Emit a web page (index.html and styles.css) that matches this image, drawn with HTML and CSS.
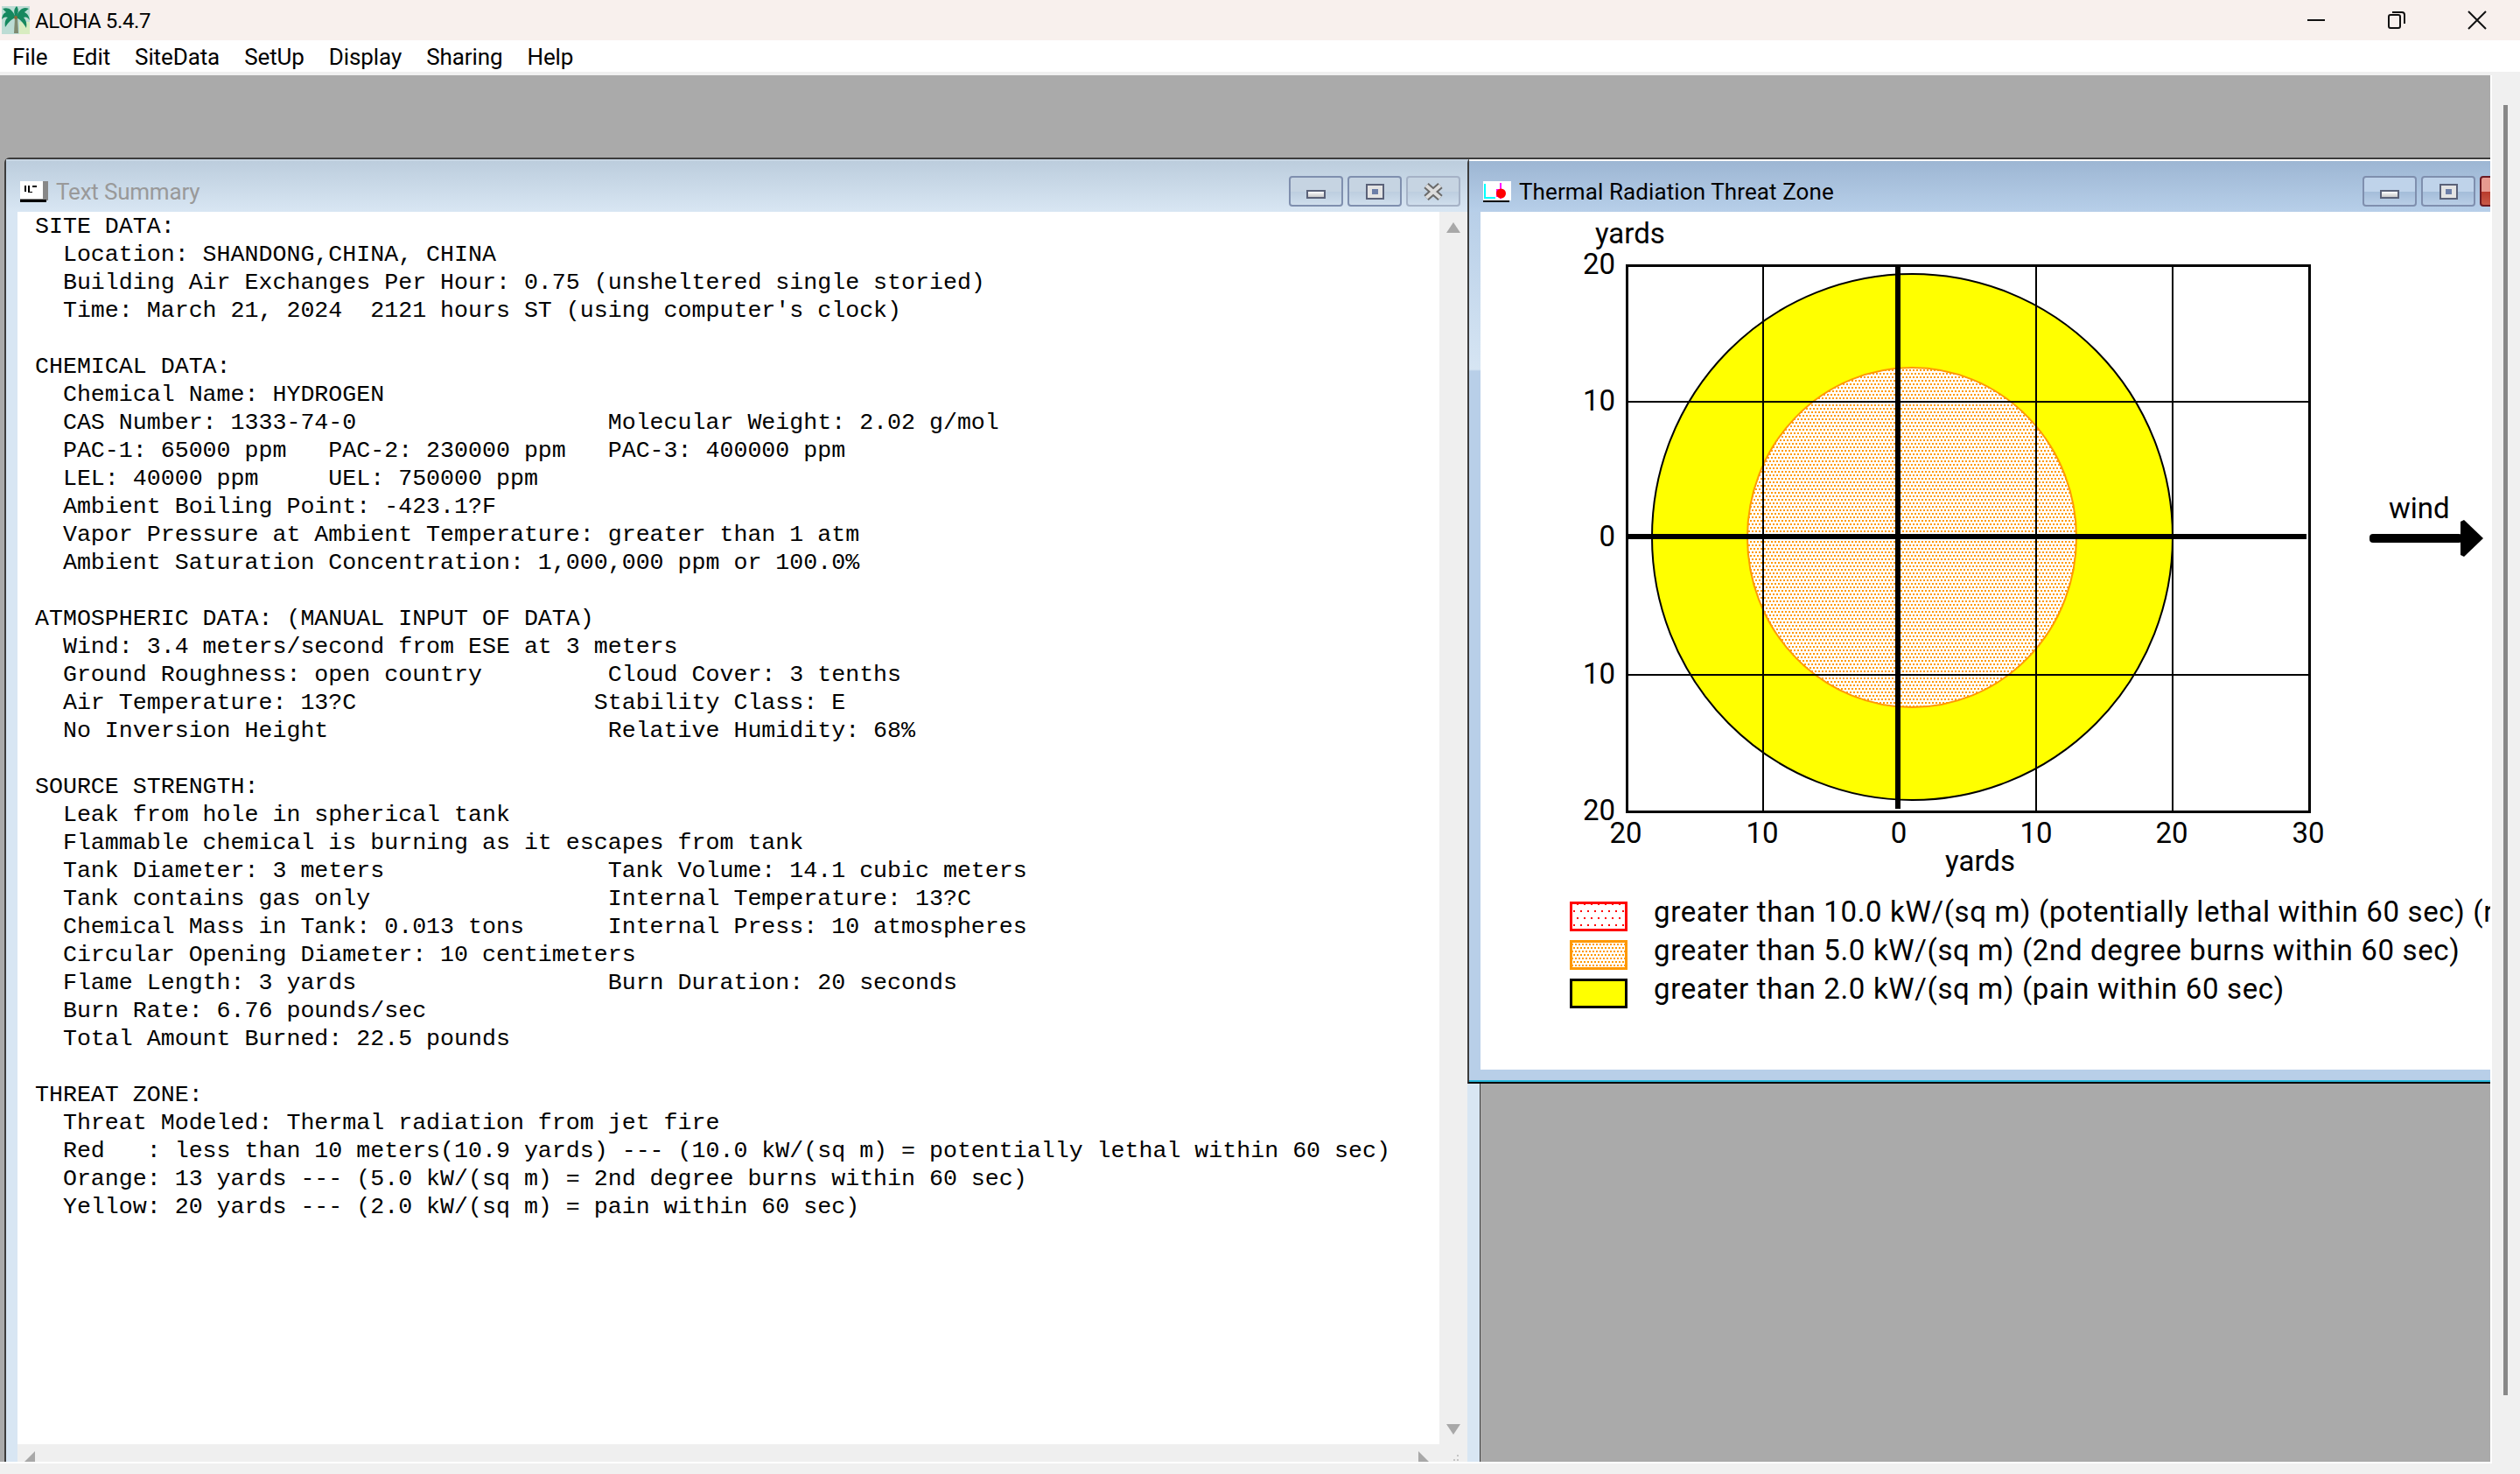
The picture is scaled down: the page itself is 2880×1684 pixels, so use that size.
FILE: index.html
```html
<!DOCTYPE html>
<html lang="en">
<head>
  <meta charset="UTF-8" />
  <title>ALOHA 5.4.7</title>
  <link rel="stylesheet" href="styles.css">
</head>
<body>
  <header class="titlebar">
    <svg class="app-icon" width="32" height="32" viewBox="0 0 32 32">
      <rect width="32" height="32" fill="#bcdcd4" />
      <rect x="20" y="18" width="12" height="14" fill="#d8ecc0" />
      <path d="M15 13 L18 13 L19 31 L14 31 Z" fill="#7f8a70" />
      <path d="M16 13 C12 3 7 1 1 3 C3 5 4 6 5 7 C2 8 1 10 0 15 C3 12 5 12 7 13 C4 15 3 19 4 24 C8 18 11 15 16 13 Z" fill="#16885f" />
      <path d="M16 13 C20 3 25 0 31 3 C28 5 27 6 26 7 C29 8 31 11 32 16 C29 12 27 12 25 13 C28 16 29 20 28 25 C24 18 21 15 16 13 Z" fill="#16885f" />
      <path d="M16 13 C13 7 14 3 17 0 C20 4 19 8 16 13 Z" fill="#16885f" />
      <circle cx="16" cy="13" r="2" fill="#8a6a3a" />
    </svg>
    <span class="app-name">ALOHA 5.4.7</span>
    <div class="win-controls">
      <button class="win-control">
        <svg width="22" height="22" viewBox="0 0 22 22"><path d="M1 11 H21" stroke="#111" stroke-width="2" /></svg>
      </button>
      <button class="win-control">
        <svg width="22" height="22" viewBox="0 0 22 22" fill="none" stroke="#111" stroke-width="2"><rect x="2" y="5" width="13" height="15" rx="2" /><path d="M6 2 H17 Q20 2 20 5 V15" /></svg>
      </button>
      <button class="win-control">
        <svg width="22" height="22" viewBox="0 0 22 22"><path d="M1 1 L21 21 M21 1 L1 21" stroke="#111" stroke-width="2" /></svg>
      </button>
    </div>
  </header>

  <nav class="menubar">
    <span>File</span>
    <span>Edit</span>
    <span>SiteData</span>
    <span>SetUp</span>
    <span>Display</span>
    <span>Sharing</span>
    <span>Help</span>
  </nav>

  <div class="main">
    <div class="workspace">

      <section class="window text-window">
        <div class="window-title inactive">
          <svg width="32" height="24" viewBox="0 0 32 24">
            <rect width="32" height="22" fill="#fff" />
            <rect x="26" width="6" height="20" fill="#888" />
            <rect y="20" width="32" height="2" fill="#888" />
            <rect y="21" width="30" height="3" fill="#000" />
            <path d="M5 5 H7 V12 H5 Z M9 5 H11 V12 H14 V13 H9 Z M14 5 H19 V7 H14 Z" fill="#000" />
          </svg>
          <span class="window-name">Text Summary</span>
          <div class="window-buttons">
            <button class="window-button"><span class="icon-min"></span></button>
            <button class="window-button"><span class="icon-max"></span></button>
            <button class="window-button close-off">
              <svg width="24" height="20" viewBox="0 0 24 20"><path d="M4 3 L20 17 M20 3 L4 17" stroke="#6a6a6a" stroke-width="8" /><path d="M4 3 L20 17 M20 3 L4 17" stroke="#ddd" stroke-width="4" /></svg>
            </button>
          </div>
        </div>
        <div class="text-body">
          <pre class="summary">SITE DATA:
  Location: SHANDONG,CHINA, CHINA
  Building Air Exchanges Per Hour: 0.75 (unsheltered single storied)
  Time: March 21, 2024  2121 hours ST (using computer's clock)

CHEMICAL DATA:
  Chemical Name: HYDROGEN
  CAS Number: 1333-74-0                  Molecular Weight: 2.02 g/mol
  PAC-1: 65000 ppm   PAC-2: 230000 ppm   PAC-3: 400000 ppm
  LEL: 40000 ppm     UEL: 750000 ppm
  Ambient Boiling Point: -423.1?F
  Vapor Pressure at Ambient Temperature: greater than 1 atm
  Ambient Saturation Concentration: 1,000,000 ppm or 100.0%

ATMOSPHERIC DATA: (MANUAL INPUT OF DATA)
  Wind: 3.4 meters/second from ESE at 3 meters
  Ground Roughness: open country         Cloud Cover: 3 tenths
  Air Temperature: 13?C                 Stability Class: E
  No Inversion Height                    Relative Humidity: 68%

SOURCE STRENGTH:
  Leak from hole in spherical tank
  Flammable chemical is burning as it escapes from tank
  Tank Diameter: 3 meters                Tank Volume: 14.1 cubic meters
  Tank contains gas only                 Internal Temperature: 13?C
  Chemical Mass in Tank: 0.013 tons      Internal Press: 10 atmospheres
  Circular Opening Diameter: 10 centimeters
  Flame Length: 3 yards                  Burn Duration: 20 seconds
  Burn Rate: 6.76 pounds/sec
  Total Amount Burned: 22.5 pounds

THREAT ZONE:
  Threat Modeled: Thermal radiation from jet fire
  Red   : less than 10 meters(10.9 yards) --- (10.0 kW/(sq m) = potentially lethal within 60 sec)
  Orange: 13 yards --- (5.0 kW/(sq m) = 2nd degree burns within 60 sec)
  Yellow: 20 yards --- (2.0 kW/(sq m) = pain within 60 sec)</pre>
          <div class="scroll-v">
            <span class="arrow-up"></span>
            <span class="arrow-down"></span>
          </div>
          <div class="scroll-h">
            <span class="arrow-left"></span>
            <span class="arrow-right"></span>
          </div>
          <div class="scroll-corner"><span class="grip"></span></div>
        </div>
      </section>

      <section class="window chart-window">
        <div class="window-title">
          <svg width="32" height="24" viewBox="0 0 32 24">
            <rect width="32" height="22" fill="#fff" />
            <path d="M2 3 V19 H14" fill="none" stroke="#0ff" stroke-width="2" />
            <rect x="19" y="2" width="2" height="18" fill="#f0f" />
            <rect x="15" y="9" width="3" height="9" fill="#f0f" />
            <circle cx="20.500" cy="14" r="5.500" fill="#f00" />
            <rect y="22" width="30" height="2" fill="#000" />
          </svg>
          <span class="window-name">Thermal Radiation Threat Zone</span>
          <div class="window-buttons">
            <button class="window-button"><span class="icon-min"></span></button>
            <button class="window-button"><span class="icon-max"></span></button>
            <button class="window-button close-on"></button>
          </div>
        </div>
        <div class="chart-body">
          <svg class="chart" width="1156" height="788" viewBox="0 0 1156 788" shape-rendering="crispEdges">
            <defs>
              <pattern id="dots-red" width="8" height="16" patternUnits="userSpaceOnUse">
                <rect x="0" y="2" width="2" height="2" fill="#f00" />
                <rect x="4" y="10" width="2" height="2" fill="#f00" />
              </pattern>
              <pattern id="dots-orange" width="4" height="8" patternUnits="userSpaceOnUse">
                <rect x="0" y="0" width="2" height="2" fill="#f90" />
                <rect x="2" y="4" width="2" height="2" fill="#f90" />
              </pattern>
            </defs>

            <ellipse cx="493.500" cy="371.500" rx="297.500" ry="300.500" fill="#ff0" stroke="#000" stroke-width="2" shape-rendering="auto" />
            <ellipse cx="493" cy="372" rx="188" ry="194" fill="#fff" shape-rendering="auto" />
            <ellipse cx="493" cy="372" rx="188" ry="194" fill="url(#dots-orange)" stroke="#f90" stroke-width="2" shape-rendering="auto" />

            <rect x="167" y="61" width="780" height="624" fill="none" stroke="#000" stroke-width="3" />
            <path d="M323 61 V685 M635 61 V685 M791 61 V685 M167 217 H947 M167 529 H947" stroke="#000" stroke-width="2" />
            <path d="M477 61 V682 M167 371 H944" stroke="#000" stroke-width="6" />

            <text class="chart-label" x="131" y="36">yards</text>
            <text class="chart-label tick-y" x="154" y="71">20</text>
            <text class="chart-label tick-y" x="154" y="227">10</text>
            <text class="chart-label tick-y" x="154" y="382">0</text>
            <text class="chart-label tick-y" x="154" y="539">10</text>
            <text class="chart-label tick-y" x="154" y="695">20</text>
            <text class="chart-label tick-x" x="166" y="721">20</text>
            <text class="chart-label tick-x" x="322" y="721">10</text>
            <text class="chart-label tick-x" x="478" y="721">0</text>
            <text class="chart-label tick-x" x="635" y="721">10</text>
            <text class="chart-label tick-x" x="790" y="721">20</text>
            <text class="chart-label tick-x" x="946" y="721">30</text>
            <text class="chart-label tick-x" x="571" y="753">yards</text>

            <text class="chart-label" x="1038" y="350">wind</text>
            <rect x="1016" y="368" width="106" height="10" rx="4" fill="#000" shape-rendering="auto" />
            <path d="M1120 354 L1124 352 L1146 373 L1124 394 L1120 392 Z" fill="#000" shape-rendering="auto" />
          </svg>

          <ul class="legend">
            <li class="legend-item">
              <svg width="66" height="34" viewBox="0 0 66 34" shape-rendering="crispEdges"><rect x="1.500" y="1.500" width="63" height="31" fill="url(#dots-red)" stroke="#f00" stroke-width="3" /></svg>
              <span>greater than 10.0 kW/(sq m) (potentially lethal within 60 sec) (r</span>
            </li>
            <li class="legend-item">
              <svg width="66" height="34" viewBox="0 0 66 34" shape-rendering="crispEdges"><rect x="1.500" y="1.500" width="63" height="31" fill="url(#dots-orange)" stroke="#f90" stroke-width="3" /></svg>
              <span>greater than 5.0 kW/(sq m) (2nd degree burns within 60 sec)</span>
            </li>
            <li class="legend-item">
              <svg width="66" height="34" viewBox="0 0 66 34" shape-rendering="crispEdges"><rect x="1.500" y="1.500" width="63" height="31" fill="#ff0" stroke="#000" stroke-width="3" /></svg>
              <span>greater than 2.0 kW/(sq m) (pain within 60 sec)</span>
            </li>
          </ul>
        </div>
      </section>

    </div>
    <div class="page-scroll"><div class="page-thumb"></div></div>
  </div>
</body>
</html>
```

FILE: styles.css
```css
* {
  box-sizing: border-box;
}

body {
  margin: 0;
  height: 100vh;
  display: flex;
  flex-direction: column;
  overflow: hidden;
  font-family: Roboto, "Open Sans", sans-serif;
  color: #000;
  background-color: #f0f0f0;
}

button {
  padding: 0;
  border: none;
  background: none;
}

/* top of the app */
.titlebar {
  height: 46px;
  display: flex;
  align-items: center;
  padding-left: 2px;
  background-color: #f8f0ed;
}

.app-name {
  margin-left: 6px;
  margin-top: 2px;
  font-size: 24px;
  letter-spacing: -0.4px;
}

.win-controls {
  display: flex;
  margin-left: auto;
  margin-right: 3px;
}

.win-control {
  width: 92px;
  height: 46px;
  display: flex;
  align-items: center;
  justify-content: center;
}

.menubar {
  height: 36px;
  display: flex;
  align-items: center;
  gap: 28px;
  padding-top: 2px;
  padding-left: 14px;
  font-size: 26px;
  letter-spacing: -0.1px;
  background-color: #fff;
}

.main {
  flex: 1;
  display: flex;
  padding-top: 4px;
  padding-bottom: 12px;
}

.workspace {
  position: relative;
  width: 2848px;
  overflow: hidden;
  background-color: #aaa;
  border-right: 2px solid #fff;
  border-bottom: 2px solid #fff;
}

.page-scroll {
  flex: 1;
  position: relative;
}

.page-thumb {
  position: absolute;
  top: 34px;
  left: 13px;
  width: 5px;
  height: 1474px;
  background-color: #888;
}

/* child windows */
.window {
  position: absolute;
  top: 94px;
  display: flex;
  flex-direction: column;
  border: 2px solid #3c3c3c;
  border-bottom: none;
  border-radius: 6px 0 0 0;
}

.text-window {
  left: 5px;
  width: 1687px;
  height: 1490px;
  padding: 0 14px 0 13px;
  background-color: #d8e6f3;
  border-right-width: 1px;
}

.chart-window {
  left: 1677px;
  width: 1243px;
  height: 1058px;
  padding: 0 14px 14px 13px;
  background: linear-gradient(to bottom, #b8cfe8 62px, #d6e5f3 240px, #b8cfe8 242px);
  border-bottom: 2px solid #000;
  box-shadow: inset 0 -2px 0 #2bb9dd;
}

.window-title {
  height: 60px;
  margin: 0 -14px 0 -13px;
  padding: 18px 22px 7px 16px;
  display: flex;
  align-items: center;
  gap: 9px;
  background: linear-gradient(to bottom, #9db6d3, #b7cfe9);
  border-top: 2px solid #fff;
}

.window-title.inactive {
  background: linear-gradient(to bottom, #bccddd, #d8e6f3);
  border-top-color: #c8d6e4;
}

.window-name {
  font-size: 26px;
  letter-spacing: 0.1px;
  white-space: nowrap;
}

.inactive .window-name {
  color: #999;
  letter-spacing: -0.2px;
}

.window-buttons {
  display: flex;
  gap: 5px;
  margin-left: auto;
}

.window-button {
  width: 62px;
  height: 35px;
  display: flex;
  align-items: center;
  justify-content: center;
  border: 2px solid #7f8fae;
  border-radius: 4px;
  background: linear-gradient(to bottom, #bfd3ea 50%, #a3bcd9 50%, #b9cee6);
}

.inactive .window-button {
  background: linear-gradient(to bottom, #c6d4e2 50%, #bccddf 50%, #cfdeec);
}

.close-off {
  border-color: #a5b2c6;
}

.close-on {
  border-color: #6c1a22;
  background: linear-gradient(to bottom, #e79a90 50%, #b8392a 50%, #c85a48);
}

.icon-min {
  display: block;
  width: 22px;
  height: 10px;
  margin-top: 6px;
  border: 2px solid #5a6178;
  background: linear-gradient(to bottom, #fff, #c8c8c8);
}

.icon-max {
  display: block;
  width: 21px;
  height: 18px;
  border-style: solid;
  border-width: 6px 7px;
  border-color: #e4e4e4;
  outline: 2px solid #5a6178;
  outline-offset: -2px;
  background-color: #6d7fa8;
}

/* text summary */
.text-body {
  flex: 1;
  display: grid;
  grid-template-columns: 1fr 32px;
  grid-template-rows: 1fr 20px;
  overflow: hidden;
  background-color: #fff;
}

.summary {
  margin: 0;
  padding-top: 1px;
  padding-left: 20px;
  font-family: "Liberation Mono", monospace;
  font-size: 26.62px;
  line-height: 32px;
  overflow: hidden;
}

.scroll-v {
  position: relative;
  background-color: #efefef;
}

.scroll-h {
  position: relative;
  background-color: #efefef;
}

.scroll-corner {
  position: relative;
  background-color: #efefef;
}

.grip {
  position: absolute;
  top: 12px;
  left: 20px;
  width: 2px;
  height: 2px;
  background-color: #c4c4c4;
  box-shadow: 0 5px 0 #c4c4c4, -4px 5px 0 #c4c4c4;
}

.arrow-up,
.arrow-down,
.arrow-left,
.arrow-right {
  position: absolute;
  width: 0;
  height: 0;
  border-style: solid;
  border-color: transparent;
}

.arrow-up {
  top: 12px;
  left: 8px;
  border-width: 0 8px 12px;
  border-bottom-color: #a8a8a8;
}

.arrow-down {
  bottom: 11px;
  left: 8px;
  border-width: 12px 8px 0;
  border-top-color: #a8a8a8;
}

.arrow-left {
  top: 8px;
  left: 8px;
  border-width: 12px 12px 12px 0;
  border-right-color: #a8a8a8;
}

.arrow-right {
  top: 8px;
  right: 12px;
  border-width: 12px 0 12px 12px;
  border-left-color: #a8a8a8;
}

/* threat zone chart */
.chart-body {
  height: 980px;
  overflow: hidden;
  background-color: #fff;
}

.chart {
  display: block;
}

.chart-label {
  font-family: Roboto, "Open Sans", sans-serif;
  font-size: 33px;
}

.tick-y {
  text-anchor: end;
}

.tick-x {
  text-anchor: middle;
}

.legend {
  margin: 0;
  padding: 0 0 0 102px;
  list-style: none;
  display: flex;
  flex-direction: column;
  gap: 10px;
}

.legend-item {
  height: 34px;
  display: flex;
  gap: 30px;
  font-size: 33px;
  letter-spacing: 0.65px;
  line-height: 34px;
  white-space: nowrap;
}

.legend-item span {
  margin-top: -5px;
}
```
